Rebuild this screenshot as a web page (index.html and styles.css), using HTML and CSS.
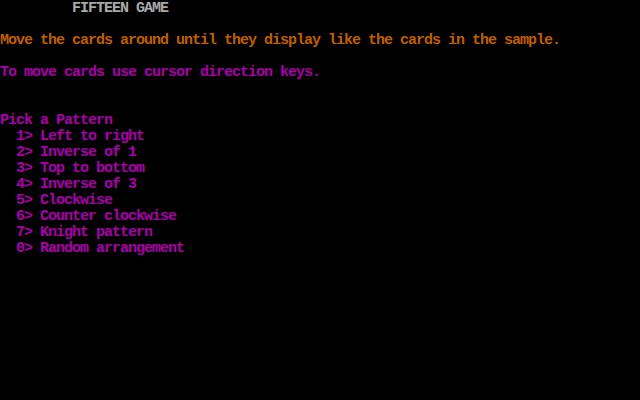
FILE: index.html
```html
<!DOCTYPE html>
<html>
<head>
<meta charset="utf-8">
<link rel="stylesheet" href="styles.css">
</head>
<body>
<pre class="screen"><span class="gray">         FIFTEEN GAME</span>

<span class="brown">Move the cards around until they display like the cards in the sample.</span>

<span class="magenta">To move cards use cursor direction keys.</span>


<span class="magenta">Pick a Pattern</span>
<span class="magenta">  1> Left to right</span>
<span class="magenta">  2> Inverse of 1</span>
<span class="magenta">  3> Top to bottom</span>
<span class="magenta">  4> Inverse of 3</span>
<span class="magenta">  5> Clockwise</span>
<span class="magenta">  6> Counter clockwise</span>
<span class="magenta">  7> Knight pattern</span>
<span class="magenta">  0> Random arrangement</span>
</pre>
</body>
</html>
```
FILE: styles.css
```css
html, body {
  margin: 0;
  padding: 0;
  background: #000;
  width: 640px;
  height: 400px;
  overflow: hidden;
}
.screen {
  margin: 0;
  padding: 1px 0 0 0;
  font-family: "Liberation Mono", monospace;
  font-size: 15px;
  letter-spacing: -1px;
  font-weight: bold;
  line-height: 16px;
  white-space: pre;
  color: #aaaaaa;
}
.gray { color: #aaaaaa; }
.brown { color: #c05f00; }
.magenta { color: #aa00aa; }
```
